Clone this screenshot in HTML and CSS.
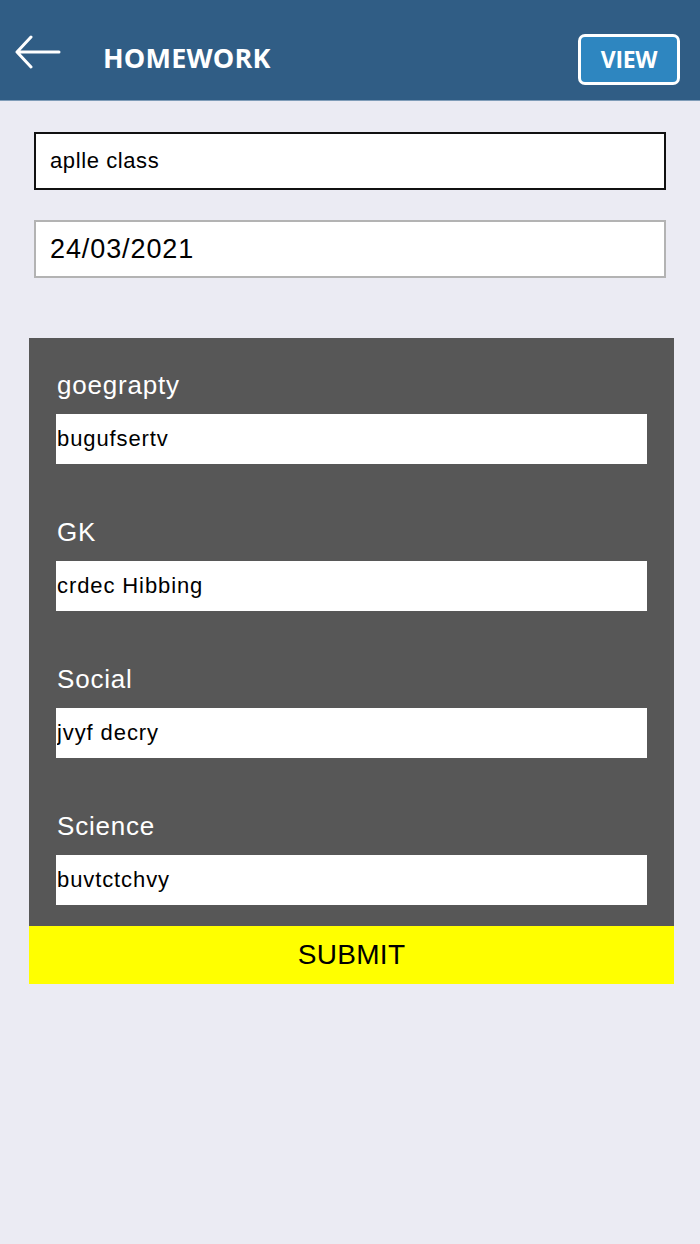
FILE: index.html
```html
<!DOCTYPE html>
<html lang="en">
<head>
    <meta charset="UTF-8">
    <meta name="viewport" content="width=device-width, initial-scale=1.0">
    <title>Homework</title>
    <link rel="stylesheet" href="styles.css">
</head>
<body>
    <header class="top-bar">
        <button class="back-btn" aria-label="Back">
            <svg width="46" height="36" viewBox="0 0 46 36">
                <path d="M44 17H3M16 2L2 17l14 15" fill="none" stroke="#fff" stroke-width="3" stroke-linecap="round" stroke-linejoin="round"/>
            </svg>
        </button>
        <h1 class="page-title">HOMEWORK</h1>
        <button class="view-btn">VIEW</button>
    </header>

    <main class="content">
        <div class="text-field active">aplle class</div>
        <div class="text-field date">24/03/2021</div>

        <form class="subject-panel">
            <div class="subject-group">
                <label>goegrapty</label>
                <input type="text" value="bugufsertv">
            </div>
            <div class="subject-group">
                <label>GK</label>
                <input type="text" value="crdec Hibbing">
            </div>
            <div class="subject-group">
                <label>Social</label>
                <input type="text" value="jvyf decry">
            </div>
            <div class="subject-group">
                <label>Science</label>
                <input type="text" value="buvtctchvy">
            </div>
        </form>
        <button class="submit-btn">SUBMIT</button>
    </main>
</body>
</html>
```

FILE: styles.css
```css
body {
    margin: 0;
    padding: 0;
    min-height: 100vh;
    background: #ebebf3;
    font-family: "Liberation Sans", Arial, sans-serif;
}

.top-bar {
    height: 100px;
    display: flex;
    align-items: center;
    background: #305d85;
    border-bottom: 1px solid #7f9cb8;
}
.back-btn {
    margin: 5px 0 0 15px;
    padding: 0;
    border: none;
    background: none;
    display: flex;
}
.page-title {
    margin: 14px 0 0 42px;
    flex: 1;
    color: #fff;
    font-family: "Open Sans", sans-serif;
    font-size: 27px;
    font-weight: 700;
    letter-spacing: 0.2px;
}
.view-btn {
    width: 102px;
    height: 51px;
    margin: 18px 20px 0 0;
    border: 3px solid #fff;
    border-radius: 7px;
    background: #2e86c0;
    color: #fff;
    font-family: "Open Sans", sans-serif;
    font-size: 23px;
    font-weight: 700;
    letter-spacing: -0.3px;
}

.content {
    padding: 31px 26px 0 29px;
}
.text-field {
    height: 54px;
    margin: 0 8px 30px 5px;
    padding: 0 14px;
    display: flex;
    align-items: center;
    background: #fff;
    border: 2px solid #b3b3b3;
    color: #000;
    font-size: 22px;
    letter-spacing: 0.6px;
}
.text-field.active {
    border-color: #111;
}
.text-field.date {
    font-size: 27px;
    letter-spacing: 0.9px;
    margin-bottom: 60px;
}

.subject-panel {
    display: flex;
    flex-direction: column;
    gap: 53px;
    padding: 32px 27px 21px 27px;
    background: #575757;
}
.subject-group {
    display: flex;
    flex-direction: column;
    gap: 14px;
}
.subject-group label {
    padding-left: 1px;
    color: #fff;
    font-size: 26px;
    line-height: 30px;
    letter-spacing: 0.8px;
}
.subject-group input {
    height: 50px;
    box-sizing: border-box;
    padding: 0 1px;
    border: none;
    background: #fff;
    color: #000;
    font-family: "Liberation Sans", Arial, sans-serif;
    font-size: 22px;
    letter-spacing: 0.9px;
}
.submit-btn {
    display: block;
    width: 100%;
    height: 58px;
    border: none;
    background: #ffff00;
    color: #000;
    font-family: "Liberation Sans", Arial, sans-serif;
    font-size: 28px;
    letter-spacing: 0.3px;
}
```
